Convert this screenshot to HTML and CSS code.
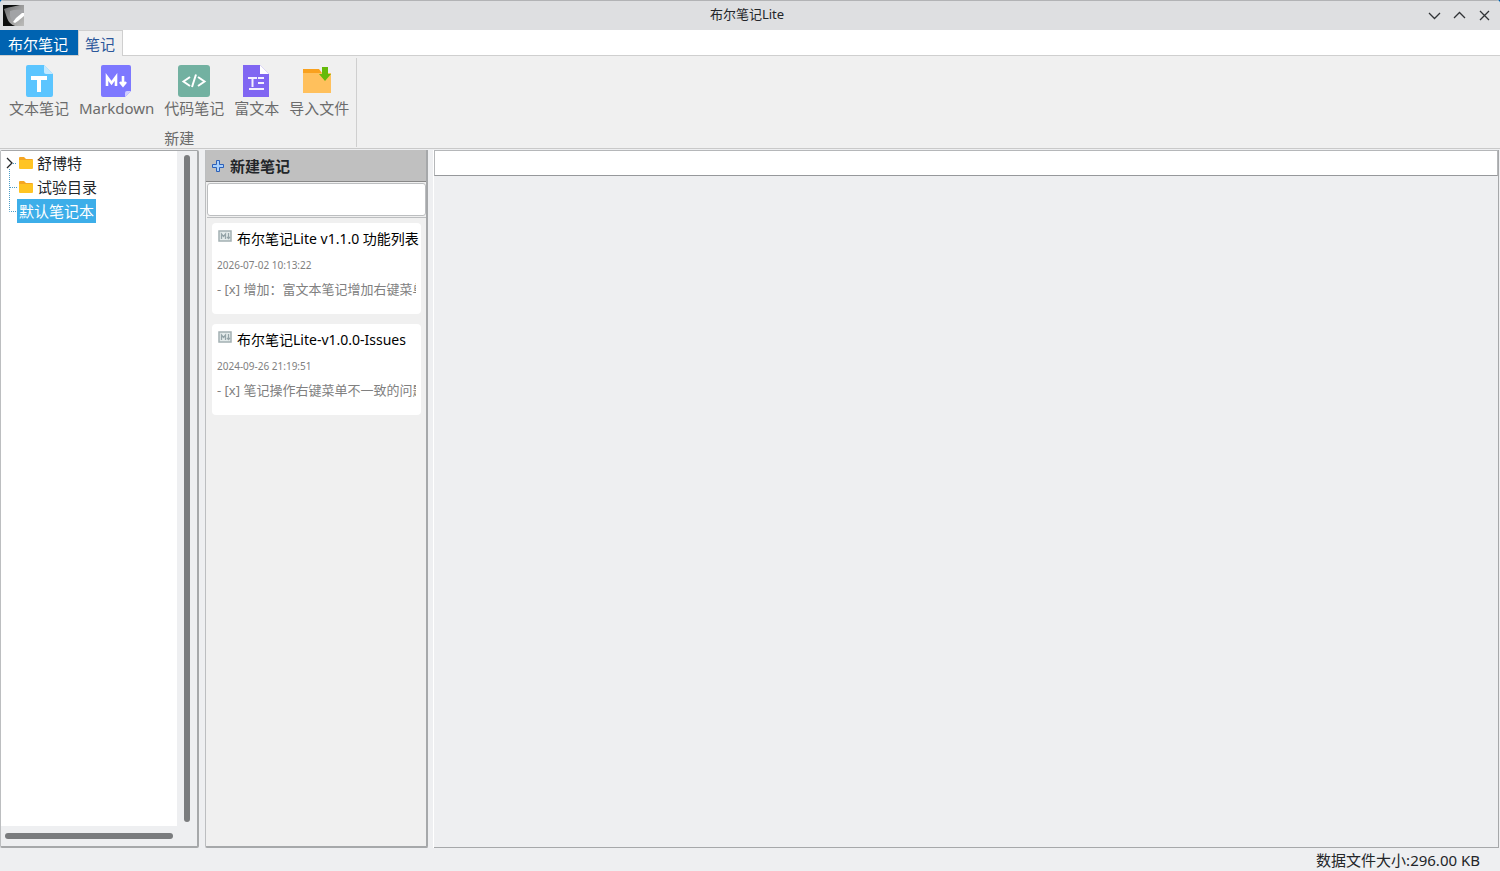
FILE: index.html
```html
<!DOCTYPE html>
<html lang="zh-CN">
<head>
<meta charset="utf-8">
<title>布尔笔记Lite</title>
<link rel="stylesheet" href="styles.css">
</head>
<body>
<div class="window">
  <header class="titlebar">
    <svg class="app-icon" viewBox="0 0 21 21" aria-hidden="true">
      <defs><linearGradient id="shade" x1="0" y1="0" x2="1" y2="1"><stop offset="0" stop-color="#686868"/><stop offset="0.5" stop-color="#9c9c9c"/><stop offset="1" stop-color="#bcbcba"/></linearGradient></defs>
      <rect width="21" height="21" fill="#0c0d0c"/>
      <path d="M1 4Q2 3 17 0H21V21H12Q6 19 4 13Z" fill="url(#shade)"/>
      <path d="M7 6Q12 4 21 5V8L12 17Q8 16 7 11Z" fill="#a2a3a6"/>
      <path d="M10 17L13 13L19 8L21 8V11L15 16L12 18Z" fill="#fff"/>
    </svg>
    <h1 class="title">布尔笔记Lite</h1>
    <div class="window-buttons">
      <button type="button" class="window-button" aria-label="最小化"><svg viewBox="0 0 13 13"><path d="M1 4L6.500 9.500L12 4"/></svg></button>
      <button type="button" class="window-button" aria-label="最大化"><svg viewBox="0 0 13 13"><path d="M1 9L6.500 3.500L12 9"/></svg></button>
      <button type="button" class="window-button" aria-label="关闭"><svg viewBox="0 0 13 13"><path d="M2 2L11 11M11 2L2 11"/></svg></button>
    </div>
  </header>

  <nav class="tabs">
    <button type="button" class="tab tab-app">布尔笔记</button>
    <button type="button" class="tab tab-active">笔记</button>
  </nav>

  <section class="ribbon">
    <div class="group">
      <div class="tools">
        <button type="button" class="tool">
          <svg class="tool-icon" viewBox="0 0 32 32"><path d="M4 0H21L30 9V30Q30 32 28 32H5Q3 32 3 30V2Q3 0 5 0Z" fill="#5bc5ff"/><path d="M21 0L30 9H23Q21 9 21 7Z" fill="#c4e9ff"/><path d="M8 11H24V15H18V27H14V15H8Z" fill="#fff"/></svg>
          <span>文本笔记</span>
        </button>
        <button type="button" class="tool">
          <svg class="tool-icon" viewBox="0 0 32 32"><path d="M2 0H28Q30 0 30 2V26L24 32H2Q0 32 0 30V2Q0 0 2 0Z" fill="#7d78ff"/><path d="M24 32V28Q24 26 26 26H30Z" fill="#cfcdff"/><path d="M6 21V12L10.500 18L15 12V21M22 11V20M19 17L22 20.500L25 17" fill="none" stroke="#fff" stroke-width="2.600"/></svg>
          <span>Markdown</span>
        </button>
        <button type="button" class="tool">
          <svg class="tool-icon" viewBox="0 0 32 32"><rect width="32" height="32" rx="3" fill="#72b1a1"/><path d="M12 12L5.500 16.500L12 21M20 12L26.500 16.500L20 21M18 9.500L14 22" fill="none" stroke="#fff" stroke-width="2"/></svg>
          <span>代码笔记</span>
        </button>
        <button type="button" class="tool">
          <svg class="tool-icon" viewBox="0 0 32 32"><path d="M2 0H19L28 9V32H2Z" fill="#8066f2"/><path d="M19 0L28 9H19Z" fill="#fff"/><path d="M7 13H16M11.500 13V22M17 13H23M17 18H23M8 24H23" fill="none" stroke="#fff" stroke-opacity=".9" stroke-width="2"/></svg>
          <span>富文本</span>
        </button>
        <button type="button" class="tool">
          <svg class="tool-icon" viewBox="0 0 32 32"><path d="M0 4H16L19 8H28V28H0Z" fill="#f9a11e"/><path d="M0 8H28V28H0Z" fill="#ffc05c"/><path d="M19 2H25V9H28L22 16L16 9H19Z" fill="#65ba09"/></svg>
          <span>导入文件</span>
        </button>
      </div>
      <div class="group-name">新建</div>
    </div>
  </section>

  <main class="main">
    <aside class="tree-panel">
      <div class="tree-row">
        <ul class="tree">
          <li class="node"><svg class="branch" viewBox="0 0 17 24"><path d="M9.500 18V24M13 12.500H17" class="dots"/><path d="M7 7L12 12L7 17" class="chevron"/></svg><svg class="folder" viewBox="0 0 14 12"><path d="M0 1Q0 0 1 0H5L7 2H13Q14 2 14 3V11H0Z" fill="#f5a623"/><path d="M0 3H14V11Q14 12 13 12H1Q0 12 0 11Z" fill="#ffc423"/></svg><span>舒博特</span></li>
          <li class="node"><svg class="branch" viewBox="0 0 17 24"><path d="M9.500 0V24M10 12.500H17" class="dots"/></svg><svg class="folder" viewBox="0 0 14 12"><path d="M0 1Q0 0 1 0H5L7 2H13Q14 2 14 3V11H0Z" fill="#f5a623"/><path d="M0 3H14V11Q14 12 13 12H1Q0 12 0 11Z" fill="#ffc423"/></svg><span>试验目录</span></li>
          <li class="node"><svg class="branch" viewBox="0 0 17 24"><path d="M9.500 0V12.500H17" class="dots"/></svg><span class="selected">默认笔记本</span></li>
        </ul>
        <div class="bar-vertical"></div>
      </div>
      <div class="bar-horizontal"></div>
    </aside>

    <section class="notes-panel">
      <button type="button" class="new-note"><svg class="plus" viewBox="0 0 12 12"><path d="M4.500 .500H7.500V4.500H11.500V7.500H7.500V11.500H4.500V7.500H.500V4.500H4.500Z" fill="#a9d0fc" stroke="#2b5fb8"/></svg>新建笔记</button>
      <div class="search"><input class="search-box" type="text" aria-label="搜索笔记"></div>
      <div class="notes">
        <article class="note">
          <h2 class="note-title"><svg class="md" viewBox="0 0 14 12"><rect x="1" y="1" width="12" height="10" fill="#e4ebeb" stroke="#a3b0b3" stroke-width="1.500"/><path d="M3.500 9V4L5.500 6.500L7.500 4V9M10.500 3V8M9 7L10.500 8.500L12 7" fill="none" stroke="#95a4a8" stroke-width="1.300"/></svg><span>布尔笔记Lite v1.1.0 功能列表</span></h2>
          <time class="note-time">2026-07-02 10:13:22</time>
          <p class="note-text">- [x] 增加：富文本笔记增加右键菜单</p>
        </article>
        <article class="note">
          <h2 class="note-title"><svg class="md" viewBox="0 0 14 12"><rect x="1" y="1" width="12" height="10" fill="#e4ebeb" stroke="#a3b0b3" stroke-width="1.500"/><path d="M3.500 9V4L5.500 6.500L7.500 4V9M10.500 3V8M9 7L10.500 8.500L12 7" fill="none" stroke="#95a4a8" stroke-width="1.300"/></svg><span>布尔笔记Lite-v1.0.0-Issues</span></h2>
          <time class="note-time">2024-09-26 21:19:51</time>
          <p class="note-text">- [x] 笔记操作右键菜单不一致的问题</p>
        </article>
      </div>
    </section>

    <section class="editor">
      <input class="editor-title" type="text" aria-label="笔记标题">
    </section>
  </main>

  <footer class="status">数据文件大小:296.00 KB</footer>
</div>
</body>
</html>
```
FILE: styles.css
```css
* { box-sizing: border-box; }

body {
  margin: 0;
  background: #0063b1;
  color: #232629;
  font: 15px/20px "Noto Sans", "Noto Sans CJK SC", sans-serif;
}

button {
  margin: 0;
  padding: 0;
  border: 0;
  background: none;
  color: inherit;
  font: inherit;
}

svg { display: block; flex: none; }

.window {
  display: flex;
  flex-direction: column;
  height: 100vh;
  overflow: hidden;
  border-radius: 4px 4px 0 0;
  background: #eeeff1;
}

.titlebar {
  display: grid;
  grid-template-columns: 1fr auto 1fr;
  align-items: center;
  height: 30px;
  padding: 0 9px 0 3px;
  border-top: 1px solid #b2b3b5;
  background: #dedfe1;
}
.app-icon { width: 21px; height: 21px; }
.title { margin: 0; padding-bottom: 3px; font-size: 13px; font-weight: 400; line-height: 20px; }
.window-buttons { display: flex; justify-content: flex-end; gap: 12px; }
.window-button svg { width: 13px; height: 13px; fill: none; stroke: #303336; stroke-width: 1.3; }

.tabs {
  display: flex;
  height: 26px;
  border-bottom: 1px solid #cfcfcf;
  background: #fff;
}
.tab { padding: 3px 8px 0; line-height: 22px; }
.tab-app { padding-right: 10px; background: #0063b1; color: #fff; }
.tab-active {
  height: 26px;
  padding: 0 7px 0 6px;
  border: solid #cfcfcf;
  border-width: 1px 1px 0;
  background: #f0f0f0;
  color: #2b579a;
}

.ribbon {
  display: flex;
  height: 93px;
  padding: 2px 0 1px;
  border-bottom: 1px solid #c9c9c9;
  background: #f0f0f0;
  color: #6b6b6b;
}
.group {
  display: flex;
  flex-direction: column;
  padding: 7px 7px 0 9px;
  border-right: 1px solid #cfcfcf;
}
.tools { display: flex; gap: 10px; }
.tool { display: flex; flex-direction: column; align-items: center; line-height: 22px; }
.tool-icon { width: 32px; height: 32px; }
.group-name { padding-top: 9px; text-align: center; }

.main { display: flex; flex: 1; min-height: 0; gap: 6px; padding: 1px 1px 1px 0; }

.tree-panel {
  display: flex;
  flex-direction: column;
  width: 199px;
  border: solid #a6a8aa;
  border-width: 1px 2px 2px 1px;
  border-left-color: #bcbec0;
  border-radius: 2px;
}
.tree-row { display: flex; flex: 1; min-height: 0; }
.tree { flex: 1; margin: 0; padding: 0; background: #fff; list-style: none; }
.node { display: flex; align-items: center; height: 24px; line-height: 24px; }
.branch { width: 17px; height: 24px; margin-left: -1px; fill: none; }
.dots { stroke: #4a9cc7; stroke-dasharray: 1 1; }
.chevron { stroke: #232629; stroke-width: 1.3; }
.folder { width: 14px; height: 12px; margin: 0 4px 0 2px; }
.selected { padding: 0 2px; background: #3daee9; color: #fff; }
.bar-vertical { width: 6px; margin: 4px 7px 4px; border-radius: 3px; background: #7a7c7e; }
.bar-horizontal { width: 168px; height: 6px; margin: 7px 4px 7px; border-radius: 3px; background: #7a7c7e; }

.notes-panel {
  display: flex;
  flex-direction: column;
  width: 223px;
  padding-left: 1px;
  border: solid #a6a8aa;
  border-width: 0 2px 2px 1px;
  border-left-color: #bcbec0;
  border-radius: 0 0 2px 2px;
  background: #f0f0f0;
}
.new-note {
  display: flex;
  align-items: center;
  gap: 6px;
  height: 32px;
  margin-left: -1px;
  padding: 0 6px;
  border-bottom: 1px solid #888;
  background: #c0c0c0;
  font-weight: 700;
}
.plus { width: 12px; height: 12px; }
.search { padding: 1px 0; border-bottom: 1px solid #bcbec0; }
.search-box { display: block; width: 100%; height: 33px; border: 1px solid #bcbec0; border-radius: 3px; background: #fff; }
.notes { display: flex; flex-direction: column; gap: 10px; padding: 5px; }
.note { height: 91px; padding: 4px 5px; border-radius: 4px; background: #fff; overflow: hidden; }
.note-title {
  display: flex;
  gap: 5px;
  margin: 0 -5px 0 1px;
  color: #000;
  font-size: 14px;
  font-weight: 400;
  line-height: 24px;
  white-space: nowrap;
}
.md { width: 14px; height: 12px; margin-top: 3px; }
.note-time { display: block; margin-top: 4px; color: #808080; font-size: 10px; line-height: 20px; }
.note-text { margin: 4px 0 0; overflow: hidden; color: #808080; font-size: 13px; line-height: 20px; white-space: nowrap; }

.editor {
  flex: 1;
  min-width: 0;
  border: solid #a6a8aa;
  border-width: 0 1px 1px 0;
  box-shadow: -1px 0 #fff;
}
.editor-title {
  display: block;
  width: 100%;
  height: 26px;
  border: 1px solid #b5b7b9;
  border-bottom-color: #96989b;
  background: #fff;
}

.status { height: 22px; padding: 1px 20px; text-align: right; }
```
